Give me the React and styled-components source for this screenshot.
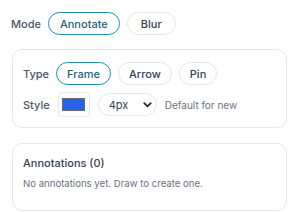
import React from 'react';
import styled, { createGlobalStyle } from 'styled-components';

const Global = createGlobalStyle`
  body {
    margin: 0;
    background: #fff;
    font-family: Inter, "Noto Sans", sans-serif;
    color: #374151;
  }
`;

const Panel = styled.div`
  width: 296px;
  box-sizing: border-box;
  padding: 12px 9px 0 11px;
  display: flex;
  flex-direction: column;
`;

const Row = styled.div`
  display: flex;
  align-items: center;
  gap: ${p => p.$gap || 7}px;
`;

const Label = styled.span`
  font-size: 11px;
  font-weight: 500;
  color: #4b5563;
`;

const Pill = styled.button`
  height: 23px;
  box-sizing: border-box;
  padding: 0 ${p => p.$pad || 10}px;
  border-radius: 999px;
  border: 1px solid ${p => (p.$active ? '#1f8fad' : '#e3e5e8')};
  background: #fff;
  color: ${p => (p.$active ? '#27627a' : '#374151')};
  font-family: inherit;
  font-size: 11px;
  font-weight: 500;
  cursor: pointer;
`;

const Card = styled.div`
  margin-top: ${p => p.$mt || 14}px;
  margin-left: 1px;
  border: 1px solid #e5e7eb;
  border-radius: 10px;
  padding: ${p => p.$pad || '12px 10px 10px'};
  display: flex;
  flex-direction: column;
  gap: ${p => p.$gap || 7}px;
`;

const Swatch = styled.div`
  width: 32px;
  height: 25px;
  box-sizing: border-box;
  border: 1px solid #e5e7eb;
  border-radius: 4px;
  display: flex;
  align-items: center;
  justify-content: center;
`;

const SwatchFill = styled.div`
  width: 23px;
  height: 13px;
  box-sizing: border-box;
  background: ${p => p.$color};
  border: 1px solid #6b6b6b;
`;

const Select = styled.div`
  width: 59px;
  height: 23px;
  box-sizing: border-box;
  border: 1px solid #e5e7eb;
  border-radius: 999px;
  padding: 0 3px 0 10px;
  display: flex;
  align-items: center;
  justify-content: space-between;
  font-size: 11px;
  color: #374151;
`;

const Hint = styled.span`
  font-size: 10px;
  color: #6b7280;
`;

const Title = styled.div`
  font-size: 11px;
  font-weight: 500;
  color: #374151;
`;

const Empty = styled.div`
  font-size: 9.6px;
  color: #6b7280;
`;

function Chevron() {
  return (
    <svg width="11" height="11" viewBox="0 0 24 24" fill="none" stroke="#1f2937" strokeWidth="4" strokeLinecap="round" strokeLinejoin="round">
      <path d="M5 9l7 7 7-7" />
    </svg>
  );
}

export default function App() {
  return (
    <>
      <Global />
      <Panel>
        <Row $gap={7}>
          <Label>Mode</Label>
          <Pill $active $pad={11}>Annotate</Pill>
          <Pill $pad={13}>Blur</Pill>
        </Row>
        <Card>
          <Row $gap={7}>
            <Label>Type</Label>
            <Pill $active>Frame</Pill>
            <Pill>Arrow</Pill>
            <Pill>Pin</Pill>
          </Row>
          <Row $gap={8}>
            <Label>Style</Label>
            <Swatch>
              <SwatchFill $color="#2563eb" />
            </Swatch>
            <Select>
              4px
              <Chevron />
            </Select>
            <Hint>Default for new</Hint>
          </Row>
        </Card>
        <Card $mt={15} $pad="12px 10px 21px" $gap={8}>
          <Title>Annotations (0)</Title>
          <Empty>No annotations yet. Draw to create one.</Empty>
        </Card>
      </Panel>
    </>
  );
}
